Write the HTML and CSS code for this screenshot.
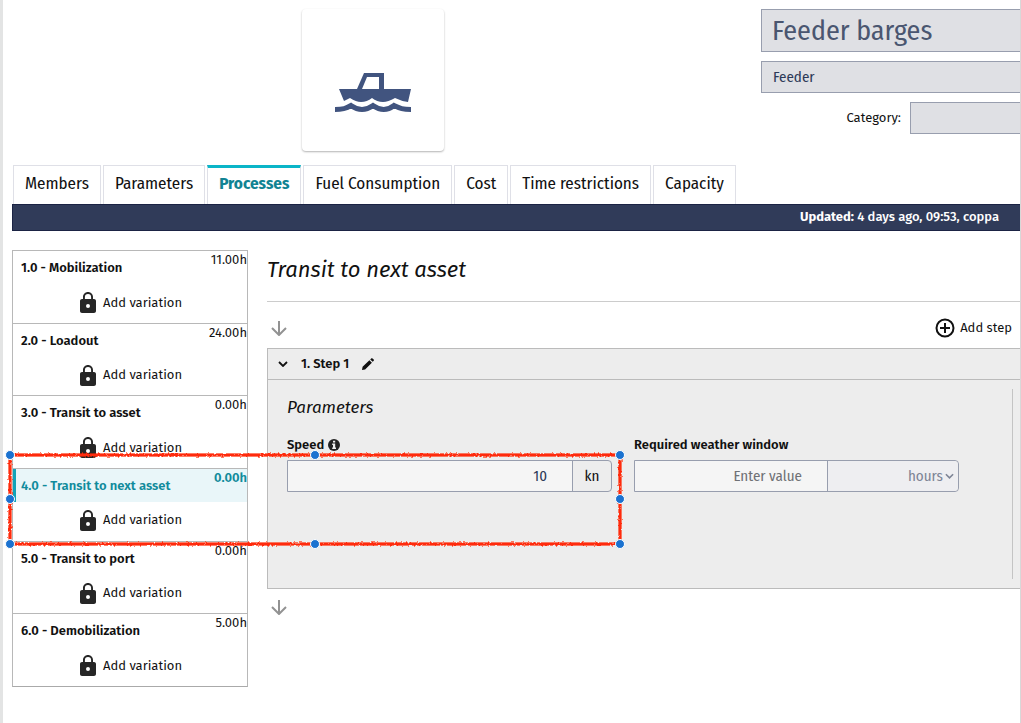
FILE: index.html
```html
<!DOCTYPE html>
<html lang="en">
<head>
  <meta charset="UTF-8">
  <meta name="viewport" content="width=device-width, initial-scale=1.0">
  <title>Feeder barges</title>
  <link rel="stylesheet" href="styles.css">
</head>
<body>
  <svg class="sprite" aria-hidden="true">
    <symbol id="lock" viewBox="4 1 16 21">
      <path fill="currentColor" fill-rule="evenodd" d="M18 8h-1V6c0-2.760-2.240-5-5-5S7 3.240 7 6v2H6c-1.100 0-2 .9-2 2v10c0 1.100.9 2 2 2h12c1.100 0 2-.9 2-2V10c0-1.100-.9-2-2-2zM12 17a2 2 0 1 1 0-4 2 2 0 0 1 0 4zM15.100 8H8.900V6a3.100 3.100 0 0 1 6.200 0z"/>
    </symbol>
    <symbol id="arrow-down" viewBox="0 0 16 16">
      <path fill="none" stroke="currentColor" stroke-width="2" d="M8 1v13M1 8l7 7 7-7"/>
    </symbol>
    <symbol id="chevron" viewBox="0 0 10 6">
      <path fill="none" stroke="currentColor" stroke-width="1.800" d="M1 1l4 4 4-4"/>
    </symbol>
  </svg>

  <div class="page">
    <header class="header">
      <div class="picture">
        <svg width="78" height="42" viewBox="0 0 78 42" aria-label="Boat">
          <path fill="#41547f" fill-rule="evenodd" d="M23 17L30 1h20v16h27l-3 13q-7-1-13-4-7 4-12 4-6 0-11-4-5 4-11 4-5 0-11-4-4 2-6 3L5 17zM28 17h17V5H33z"/>
          <path fill="none" stroke="#41547f" stroke-width="5" d="M1 37.500c8 0 11-1 16-4q11 8 22 0 11 8 21 0c6 3 9 4 17 4"/>
        </svg>
      </div>
      <div class="details">
        <input class="field name" type="text" value="Feeder barges" aria-label="Name">
        <input class="field" type="text" value="Feeder" aria-label="Type">
        <div class="category">
          <label for="category">Category:</label>
          <input class="field" id="category" type="text">
        </div>
      </div>
    </header>

    <nav class="tabs">
      <a href="#members">Members</a>
      <a href="#parameters">Parameters</a>
      <a href="#processes" class="active">Processes</a>
      <a href="#fuel">Fuel Consumption</a>
      <a href="#cost">Cost</a>
      <a href="#time">Time restrictions</a>
      <a href="#capacity">Capacity</a>
    </nav>
    <div class="updated"><b>Updated:</b> 4 days ago, 09:53, coppa</div>

    <div class="content">
      <ul class="processes">
        <li>
          <div class="process"><a href="#p1">1.0 - Mobilization</a><span>11.00h</span></div>
          <button class="variation"><svg><use href="#lock"/></svg>Add variation</button>
        </li>
        <li>
          <div class="process"><a href="#p2">2.0 - Loadout</a><span>24.00h</span></div>
          <button class="variation"><svg><use href="#lock"/></svg>Add variation</button>
        </li>
        <li>
          <div class="process"><a href="#p3">3.0 - Transit to asset</a><span>0.00h</span></div>
          <button class="variation"><svg><use href="#lock"/></svg>Add variation</button>
        </li>
        <li>
          <div class="process selected"><a href="#p4">4.0 - Transit to next asset</a><span>0.00h</span></div>
          <button class="variation"><svg><use href="#lock"/></svg>Add variation</button>
        </li>
        <li>
          <div class="process"><a href="#p5">5.0 - Transit to port</a><span>0.00h</span></div>
          <button class="variation"><svg><use href="#lock"/></svg>Add variation</button>
        </li>
        <li>
          <div class="process"><a href="#p6">6.0 - Demobilization</a><span>5.00h</span></div>
          <button class="variation"><svg><use href="#lock"/></svg>Add variation</button>
        </li>
      </ul>

      <main class="main">
        <h1>Transit to next asset</h1>
        <div class="toolbar">
          <svg class="arrow"><use href="#arrow-down"/></svg>
          <button class="add-step">
            <svg width="20" height="20" viewBox="0 0 20 20" fill="none" stroke="currentColor" stroke-width="2">
              <circle cx="10" cy="10" r="8.500"/>
              <path d="M10 5v10M5 10h10"/>
            </svg>
            Add step
          </button>
        </div>

        <section class="step">
          <div class="step-header">
            <button aria-label="Collapse"><svg class="chevron"><use href="#chevron"/></svg></button>
            <h2>1. Step 1</h2>
            <button aria-label="Edit">
              <svg width="12" height="12" viewBox="0 0 12 12" fill="currentColor">
                <path d="M0 12l.6-3.200 6.800-6.600 2.500 2.500-6.800 6.700zM8.200 1.400L9.300.4q.6-.6 1.200 0l1.200 1.200q.5.600 0 1.100l-1 1.100z"/>
              </svg>
            </button>
          </div>
          <div class="step-body">
            <h3>Parameters</h3>
            <div class="params">
              <div class="param">
                <label for="speed">Speed
                  <svg width="12" height="12" viewBox="0 0 12 12">
                    <circle cx="6" cy="6" r="6" fill="#222"/>
                    <path fill="#eee" d="M5 1.800h2.200v1.800H5zM4.200 4.600h3v3.800H8V10H4.200V8.400H5V6.100h-.8z"/>
                  </svg>
                </label>
                <div class="input-group">
                  <input id="speed" type="text" value="10">
                  <span class="unit">kn</span>
                </div>
              </div>
              <div class="param">
                <label for="weather">Required weather window</label>
                <div class="input-group">
                  <input id="weather" type="text" placeholder="Enter value">
                  <div class="unit-select">
                    <select aria-label="Unit"><option>hours</option></select>
                    <svg><use href="#chevron"/></svg>
                  </div>
                </div>
              </div>
            </div>
          </div>
        </section>
        <svg class="arrow"><use href="#arrow-down"/></svg>
      </main>
    </div>
  </div>

  <!-- Crayon selection box with resize handles -->
  <svg class="marker" width="630" height="110" viewBox="0 0 630 110" aria-hidden="true">
    <filter id="rough" x="-5%" y="-10%" width="110%" height="120%">
      <feTurbulence type="fractalNoise" baseFrequency="0.5" numOctaves="2" seed="4"/>
      <feDisplacementMap in="SourceGraphic" scale="3"/>
    </filter>
    <rect x="10" y="10" width="610" height="89" fill="none" stroke="#ff2a0a" stroke-width="3.200" filter="url(#rough)"/>
    <g fill="#1b72d0" stroke="#fff" stroke-width="1">
      <circle cx="10" cy="10" r="4.500"/>
      <circle cx="315" cy="10" r="4.500"/>
      <circle cx="620" cy="10" r="4.500"/>
      <circle cx="10" cy="54" r="4.500"/>
      <circle cx="620" cy="54" r="4.500"/>
      <circle cx="10" cy="99" r="4.500"/>
      <circle cx="315" cy="99" r="4.500"/>
      <circle cx="620" cy="99" r="4.500"/>
    </g>
  </svg>
</body>
</html>
```

FILE: styles.css
```css
* {
  box-sizing: border-box;
}
body {
  margin: 0;
  font-family: "Fira Sans", "Fira Sans Condensed", Roboto, sans-serif;
  font-size: 13px;
  line-height: 20px;
  color: #111;
  background-color: #fff;
  position: relative;
}
button,
input,
select {
  font: inherit;
  color: inherit;
}
button {
  display: flex;
  align-items: center;
  padding: 0;
  border: none;
  background: none;
  cursor: pointer;
}
a {
  color: inherit;
  text-decoration: none;
}
h1,
h2,
h3 {
  margin: 0;
}
.sprite {
  display: none;
}
.page {
  min-height: 100vh;
  padding: 9px 0 0 9px;
  border-left: 3px solid #e3e4e4;
  border-right: 1px solid #d8d8d8;
}

/* Header */
.header {
  display: flex;
  justify-content: space-between;
  height: 156px;
}
.picture {
  display: flex;
  align-items: center;
  justify-content: center;
  width: 142px;
  height: 142px;
  margin-left: 290px;
  padding-top: 26px;
  border-radius: 4px;
  box-shadow: 0 1px 2px rgba(0, 0, 0, 0.3);
}
.details {
  display: flex;
  flex-direction: column;
  gap: 9px;
  width: 259px;
}
.field {
  width: 100%;
  height: 32px;
  padding: 0 11px;
  border: 1px solid #989eae;
  border-right: none;
  border-radius: 0;
  background-color: #dfe0e4;
  color: #2d3a58;
  font-family: "Fira Sans Condensed", Roboto, sans-serif;
  font-size: 15px;
}
.field.name {
  height: 43px;
  padding: 0 10px;
  color: #4a5670;
  font-size: 28px;
}
.category {
  display: flex;
  align-items: center;
  justify-content: flex-end;
  gap: 9px;
}
.category .field {
  width: 110px;
}

/* Tabs */
.tabs {
  display: flex;
  gap: 2px;
  padding-left: 1px;
  font-family: "Fira Sans Condensed", Roboto, sans-serif;
}
.tabs a {
  height: 39px;
  padding: 8px 11px;
  border: 1px solid #dfe0e7;
  border-bottom: none;
  font-size: 17px;
}
.tabs .active {
  border-top: 3px solid #0bb5c8;
  padding-top: 6px;
  color: #118393;
  font-weight: bold;
}
.updated {
  height: 27px;
  padding: 2px 21px;
  border: 1px solid #1b2344;
  border-right: none;
  background-color: #303b59;
  color: #fff;
  text-align: right;
  font-weight: 500;
}

/* Process list */
.content {
  display: flex;
  gap: 19px;
  padding-top: 19px;
}
.processes {
  display: grid;
  grid-auto-rows: 1fr;
  flex: none;
  width: 236px;
  height: 437px;
  margin: 0;
  padding: 0;
  list-style: none;
  border: 1px solid #b8b8b8;
  border-top: none;
  border-bottom-color: #aaa;
}
.processes li {
  border-top: 1px solid #b8b8b8;
}
.process {
  display: flex;
  justify-content: space-between;
  height: 33px;
  padding-left: 8px;
}
.process a {
  line-height: 33px;
  font-weight: 600;
}
.process span {
  line-height: 18px;
}
.process.selected {
  padding-left: 5px;
  border-left: 3px solid #12a3b8;
  background-color: #e9f6f9;
  color: #118b9c;
  font-weight: 600;
}
.variation {
  gap: 7px;
  margin: 8px auto 0;
  padding-left: 2px;
}
.variation svg {
  width: 16px;
  height: 21px;
  color: #262626;
}

/* Main column */
.main {
  flex: 1;
  min-width: 0;
}
h1 {
  height: 52px;
  border-bottom: 1px solid #ccc;
  font-size: 22px;
  line-height: 40px;
  font-weight: normal;
  font-style: italic;
}
.toolbar {
  display: flex;
  align-items: center;
  justify-content: space-between;
  height: 46px;
  padding: 6px 8px 0 0;
}
.arrow {
  display: block;
  width: 16px;
  height: 16px;
  margin-left: 4px;
  color: #929292;
}
.add-step {
  gap: 5px;
}
.step {
  margin-bottom: 10px;
  border: 1px solid #bbb;
  border-right: none;
  background-color: #ededed;
}
.step-header {
  display: flex;
  align-items: center;
  gap: 13px;
  height: 31px;
  padding-left: 10px;
  border-bottom: 1px solid #bbb;
}
.step-header h2 {
  font-size: 13px;
  font-weight: 600;
}
.chevron {
  width: 10px;
  height: 6px;
}
.step-body {
  height: 190px;
  margin: 9px 7px 9px 0;
  padding: 9px 53px 0 19px;
  border-right: 1px solid #c4c4c4;
}
h3 {
  font-size: 17px;
  font-weight: normal;
  font-style: italic;
}
.params {
  display: grid;
  grid-template-columns: repeat(2, minmax(0, 1fr));
  gap: 22px;
  padding-top: 17px;
}
.param label {
  display: flex;
  align-items: center;
  gap: 4px;
  font-weight: 600;
}
.input-group {
  display: flex;
  height: 32px;
  margin-top: 5px;
  border: 1px solid #989eae;
  border-radius: 0 4px 4px 0;
  font-family: "Fira Sans Condensed", Roboto, sans-serif;
  font-size: 15px;
}
.input-group input {
  flex: 1;
  min-width: 0;
  padding: 0 25px;
  border: none;
  background-color: #f5f5f5;
  color: #2d3a58;
  text-align: right;
}
.input-group input::placeholder {
  color: #6f7175;
}
.unit {
  width: 39px;
  border-left: 1px solid #989eae;
  line-height: 30px;
  text-align: center;
}
.unit-select {
  display: flex;
  align-items: center;
  width: 131px;
  padding-right: 4px;
  border-left: 1px solid #989eae;
  background-color: #eeeef1;
  color: #7e8596;
  border-radius: 0 4px 4px 0;
}
.unit-select select {
  flex: 1;
  height: 30px;
  padding-right: 2px;
  border: none;
  background: none;
  appearance: none;
  text-align-last: right;
}
.unit-select svg {
  width: 9px;
  height: 6px;
}

.marker {
  position: absolute;
  top: 445px;
  left: 0;
  pointer-events: none;
}
```
